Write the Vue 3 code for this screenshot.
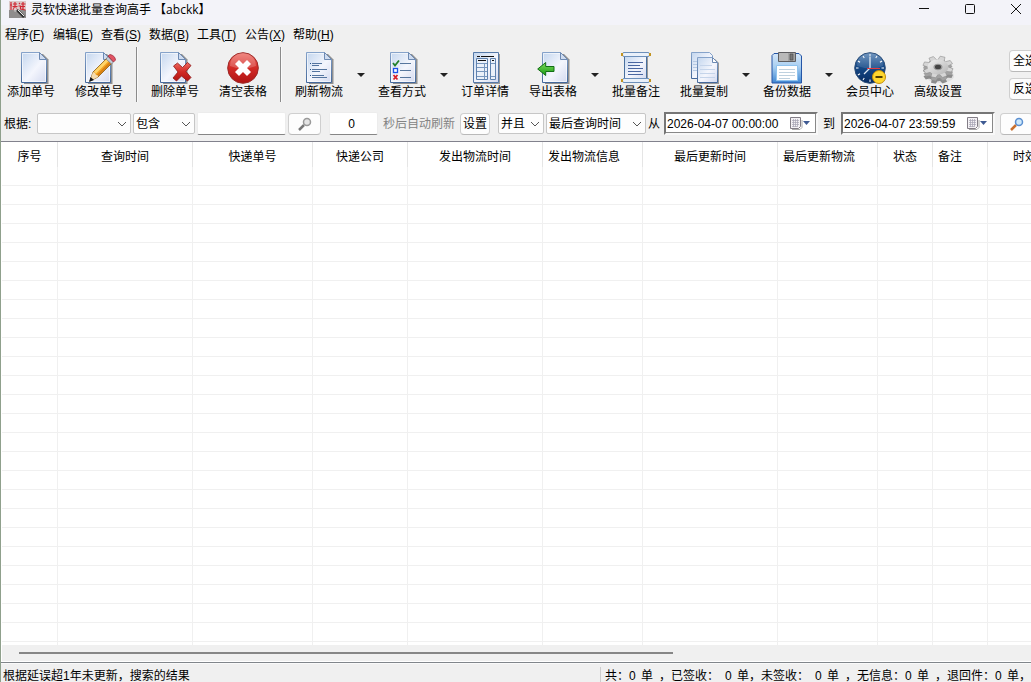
<script setup>
import { ref } from 'vue'

const menus = [
  ['程序', 'F'], ['编辑', 'E'], ['查看', 'S'], ['数据', 'B'],
  ['工具', 'T'], ['公告', 'X'], ['帮助', 'H'],
]

const tools = [
  { icon: 'add', label: '添加单号' },
  { icon: 'edit', label: '修改单号', sep: true },
  { icon: 'remove', label: '删除单号' },
  { icon: 'clear', label: '清空表格', sep: true },
  { icon: 'refresh', label: '刷新物流', drop: true },
  { icon: 'view', label: '查看方式', drop: true },
  { icon: 'detail', label: '订单详情' },
  { icon: 'export', label: '导出表格', drop: true },
  { icon: 'note', label: '批量备注' },
  { icon: 'copy', label: '批量复制', drop: true },
  { icon: 'backup', label: '备份数据', drop: true },
  { icon: 'member', label: '会员中心' },
  { icon: 'settings', label: '高级设置' },
]

const columns = [
  { title: '序号', size: 'w56' },
  { title: '查询时间', size: 'w135' },
  { title: '快递单号', size: 'w120' },
  { title: '快递公司', size: 'w95' },
  { title: '发出物流时间', size: 'w135' },
  { title: '发出物流信息', size: 'w100', left: true },
  { title: '最后更新时间', size: 'w135' },
  { title: '最后更新物流', size: 'w100', left: true },
  { title: '状态', size: 'w55' },
  { title: '备注', size: 'w55', left: true },
  { title: '时效', size: 'w75' },
]
const rowCount = 26

const stats = [
  { label: '共：', value: 0, end: '，', spaced: true, size: 's66' },
  { label: '已签收：', value: 0, end: '，', wide: true, size: 's90' },
  { label: '未签收：', value: 0, end: '，', wide: true, spaced: true, size: 's96' },
  { label: '无信息：', value: 0, end: '，', spaced: true, size: 's90' },
  { label: '退回件：', value: 0, end: '，', size: 's90' },
]

const keyword = ref('')
const seconds = ref('0')
const from = ref('2026-04-07 00:00:00')
const to = ref('2026-04-07 23:59:59')
const ticks = [0, 30, 60, 90, 120, 150, 180, 210, 240, 270, 300, 330]
const teeth = [0, 45, 90, 135, 180, 225, 270, 315]
</script>

<template>
  <div class="window">
    <svg class="defs" aria-hidden="true">
      <defs>
        <linearGradient id="paper" x1="0" y1="0" x2="1" y2="1">
          <stop offset="0" stop-color="#c3d6ee" />
          <stop offset=".55" stop-color="#f4f6fd" />
          <stop offset="1" stop-color="#d3d9ef" />
        </linearGradient>
        <linearGradient id="edge" x1="0" y1="0" x2="0" y2="1">
          <stop offset="0" stop-color="#86a3ca" />
          <stop offset="1" stop-color="#44689b" />
        </linearGradient>
        <linearGradient id="red" x1="0" y1="0" x2="0" y2="1">
          <stop offset="0" stop-color="#ee6a62" />
          <stop offset=".5" stop-color="#d22a26" />
          <stop offset="1" stop-color="#b01414" />
        </linearGradient>
        <linearGradient id="green" x1="0" y1="0" x2="0" y2="1">
          <stop offset="0" stop-color="#7fdc5c" />
          <stop offset="1" stop-color="#159a12" />
        </linearGradient>
        <linearGradient id="disk" x1="0" y1="0" x2="0" y2="1">
          <stop offset="0" stop-color="#d4e6f8" />
          <stop offset=".45" stop-color="#a9cff1" />
          <stop offset="1" stop-color="#3f86d2" />
        </linearGradient>
        <linearGradient id="clock" x1="0" y1="0" x2="0" y2="1">
          <stop offset="0" stop-color="#5d88b8" />
          <stop offset=".45" stop-color="#164a88" />
          <stop offset="1" stop-color="#082c62" />
        </linearGradient>
        <linearGradient id="steel" x1="0" y1="0" x2="1" y2="1">
          <stop offset="0" stop-color="#f2f2f2" />
          <stop offset="1" stop-color="#b4b4b4" />
        </linearGradient>
        <g id="sheet">
          <path d="M3 2h19l5.500 5.500V32H3z" fill="#000" opacity=".4" />
          <path d="M.500.500h18l7 7v23H.500z" fill="url(#paper)" stroke="url(#edge)" />
          <path d="M1.500 29.500V1.500H18M24.500 9v20.500h-22" fill="none" stroke="#fff" opacity=".6" />
          <path d="M18.500.500v7h7z" fill="#cfdcf0" stroke="#6d8ab3" />
        </g>
      </defs>
    </svg>

    <header class="titlebar">
      <svg class="app-icon" viewBox="0 0 17 17" aria-hidden="true">
        <rect width="17" height="17" fill="#8f8c8c" />
        <rect width="17" height="9" fill="#dcc9c8" />
        <path d="M2 1v8M1 4h2M4 3h4M6 1v4M3.500 5.500h5M6 5 4 9M6 5l2.500 4M10 2l1 1M9.500 5h2v3l5 1M12 3h4.500M14 1v7M12 5.500h4" fill="none" stroke="#d02835" stroke-width="1.200" />
        <circle cx="7" cy="8.500" r="2.500" fill="#ddd" opacity=".5" />
        <path d="m8 9 7 7" stroke="#333" stroke-width="2.500" />
        <path d="m9 9 6 6" stroke="#eee" />
      </svg>
      <h1>灵软快递批量查询高手 【abckk】</h1>
      <div class="win-buttons">
        <button type="button" aria-label="最小化"><svg viewBox="0 0 12 12"><path d="M1 5.500h10" /></svg></button>
        <button type="button" aria-label="最大化"><svg viewBox="0 0 12 12"><rect x="1.500" y="1.500" width="9" height="9" rx="1" /></svg></button>
        <button type="button" aria-label="关闭"><svg viewBox="0 0 12 12"><path d="m1 1 10 10M11 1 1 11" /></svg></button>
      </div>
    </header>

    <nav class="menu">
      <a v-for="m in menus" :key="m[1]" href="#">{{ m[0] }}(<u>{{ m[1] }}</u>)</a>
    </nav>

    <div class="toolbar">
      <template v-for="t in tools" :key="t.icon">
        <button type="button" class="tool">
          <svg viewBox="0 0 32 32" aria-hidden="true">
            <use v-if="t.icon === 'add'" href="#sheet" x="6" />
            <template v-else-if="t.icon === 'edit'">
              <use href="#sheet" x="2" />
              <path d="m7 29 3-9L24 6l5 5-14 14z" fill="#f5a623" stroke="#7a5314" stroke-width=".8" />
              <path d="M11 19.500 24 6.500l2 2-13 13z" fill="#ffd56a" />
              <path d="m15 24.500 13-13-1.500-1.500-13 13z" fill="#d98012" />
              <path d="m23 7 2-2.500 5.500 5.500-2 2z" fill="#c3ccd5" stroke="#667" stroke-width=".6" />
              <path d="m25 4 2-1.500q5 1 5.500 5.500L30.500 10z" fill="#e15464" stroke="#a22d3c" stroke-width=".8" />
              <path d="m7 29 3-9 2 1 1 2 2 .500v1.500z" fill="#f4dcb0" />
              <path d="m6 30 1.500-5 3.500 3z" fill="#151515" />
            </template>
            <template v-else-if="t.icon === 'remove'">
              <use href="#sheet" x="1" />
              <path d="m14.500 14 4-3 5 4.500 5-5 3.500 3-5 6 5 6-3.500 3.500-6-5-5 5-3.500-3 5-6z" fill="url(#red)" stroke="#8d1818" stroke-width=".8" />
            </template>
            <template v-else-if="t.icon === 'clear'">
              <circle cx="16" cy="16" r="15.300" fill="url(#red)" stroke="#9c2a28" />
              <path d="M3 14a13 13 0 0 1 26 0q-13 5-26 0" fill="#fff" opacity=".2" />
              <path d="m8 12 4-4 4 4 4-4 4 4-4 4 4 4-4 4-4-4-4 4-4-4 4-4z" fill="#fff" />
            </template>
            <template v-else-if="t.icon === 'refresh'">
              <use href="#sheet" x="3" />
              <path d="M7 11.500h1M7 17.500h1M7 23.500h1" stroke="#244f85" />
              <path d="M9 11.500h10M9 13.500h7M9 17.500h15M9 19.500h8M9 23.500h12M9 25.500h15" stroke="#54749f" />
            </template>
            <template v-else-if="t.icon === 'view'">
              <use href="#sheet" x="4" />
              <path d="m7 11 2 2.500 4-5" fill="none" stroke="#21802c" stroke-width="1.800" />
              <rect x="7.500" y="16.500" width="4" height="4" fill="#fff" stroke="#1c52e8" stroke-width="1.300" />
              <path d="m7.500 23 4 4.500m0-4.500-4 4.500" stroke="#d91e26" stroke-width="1.800" />
              <path d="M14 11.500h11M14 18.500h11M14 25.500h11" stroke="#56769e" />
            </template>
            <template v-else-if="t.icon === 'detail'">
              <path d="M5 2h26v30H5z" fill="#999" />
              <path d="M4.500.500h25v30h-25z" fill="url(#paper)" stroke="#5579a8" />
              <path d="M8 4.500h3M12 4.500h13" stroke="#111" />
              <path d="M7.500 6.500h11v21h-11zM21.500 6.500h5v21h-5z" fill="#eaf0f9" stroke="#5f82ae" />
              <path d="M9 8.500h8M23 8.500h2" stroke="#111" />
              <path d="M8 11.500h10M8 15.500h10M8 19.500h10M8 24.500h10M15.500 11v16M22 11.500h4M22 24.500h4" stroke="#7897be" />
            </template>
            <template v-else-if="t.icon === 'export'">
              <use href="#sheet" x="5" />
              <path d="m.700 17 8-6.500v4H17v5H8.700v4z" fill="url(#green)" stroke="#126e16" />
            </template>
            <template v-else-if="t.icon === 'note'">
              <path d="M6 4h22v25H6z" fill="#999" />
              <path d="M4.500 3.500h22v24h-22z" fill="url(#paper)" stroke="#486f9e" />
              <rect x="2.500" y=".5" width="27" height="4" rx="1.500" fill="#e9f0fa" stroke="#6c8fba" />
              <rect x="2.500" y="26.500" width="27" height="4" rx="1.500" fill="#e9f0fa" stroke="#6c8fba" />
              <path d="M2 1v3M30 1v3M2 27v3M30 27v3" stroke="#c29320" stroke-width="2" />
              <path d="M8 10.500h15M8 13.500h12M8 16.500h15M8 19.500h13M8 22.500h15" stroke="#4a66a0" />
            </template>
            <template v-else-if="t.icon === 'copy'">
              <path d="M3.500.500h18l3 3v23h-21z" fill="url(#paper)" stroke="url(#edge)" />
              <path d="M5 9.500h5M5 12.500h5M5 15.500h5M5 18.500h5" stroke="#b5c9e3" />
              <path d="M11 7h16l4 4v21H11z" fill="#999" />
              <path d="M9.500 5.500h15l5 5v20h-20z" fill="url(#paper)" stroke="url(#edge)" />
              <path d="M24.500 5.500v5h5z" fill="#fff" stroke="#6d8ab3" />
              <path d="M12 13.500h12M12 17.500h15M12 21.500h15M12 25.500h15" stroke="#c5d4ea" />
            </template>
            <template v-else-if="t.icon === 'backup'">
              <path d="M3 1.500h25l2.500 2.500v27H1V3.500z" fill="url(#disk)" stroke="#2455a6" />
              <path d="M7.500.500h17v9h-17z" fill="#a3a3a3" stroke="#5d5d60" />
              <path d="M8 1h9v8H8z" fill="#b9b9b9" />
              <path d="M19 2h3v6h-3z" fill="#777" stroke="#444" stroke-width=".6" />
              <path d="M5.500 13.500h21v15h-21z" fill="#fff" stroke="#8fc3ee" />
              <path d="M8 17.500h16M8 20.500h16M8 23.500h16M8 26.500h11" stroke="#bed1df" />
            </template>
            <template v-else-if="t.icon === 'member'">
              <circle cx="16" cy="16" r="15.300" fill="url(#clock)" stroke="#2a4d78" />
              <path d="M3 14a13 13 0 0 1 26 0q-10 5-26 0" fill="#fff" opacity=".13" />
              <path v-for="a in ticks" :key="a" d="M16 2v2.500" stroke="#fff" :transform="`rotate(${a} 16 16)`" />
              <path d="M16 5v11l-6 6" fill="none" stroke="#dfe8f2" stroke-width="1.300" />
              <path d="M13 16.500h13" stroke="#e6393c" />
              <circle cx="25" cy="25" r="6.500" fill="#ffd72e" stroke="#c28d09" />
              <path d="M21.500 25h7" stroke="#503e00" stroke-width="2" />
            </template>
            <template v-else>
              <ellipse cx="18" cy="24" rx="14" ry="7" fill="#e0e0e0" />
              <g transform="translate(16 21) scale(1 .72)">
                <circle r="11.500" fill="#8c8c8c" />
                <path v-for="a in teeth" :key="a" d="M-3.500-8-2.500-15h5l1 7z" fill="#8c8c8c" :transform="`rotate(${a + 18})`" />
              </g>
              <g transform="translate(16 18) scale(1 .72)">
                <circle r="11.500" fill="#a2a2a2" />
                <path v-for="a in teeth" :key="a" d="M-3.500-8-2.500-15h5l1 7z" fill="#a2a2a2" :transform="`rotate(${a + 18})`" />
              </g>
              <g transform="translate(16 15) scale(1 .72)">
                <path v-for="a in teeth" :key="a" d="M-3.500-8-2.500-15h5l1 7z" fill="#d6d6d6" stroke="#8a8a8a" stroke-width=".6" :transform="`rotate(${a + 18})`" />
                <circle r="10.500" fill="url(#steel)" />
                <circle r="3.800" fill="#444" stroke="#999" stroke-width="1.500" />
              </g>
            </template>
          </svg>
          <span>{{ t.label }}</span>
        </button>
        <button v-if="t.drop" type="button" class="drop" :aria-label="t.label + '选项'"></button>
        <i v-if="t.sep" class="sep"></i>
      </template>
      <div class="select-buttons">
        <button type="button" class="push">全选</button>
        <button type="button" class="push">反选</button>
      </div>
    </div>

    <form class="filter" @submit.prevent>
      <label for="field">根据:</label>
      <div class="combo c94">
        <select id="field"><option></option></select>
        <svg viewBox="0 0 10 6"><path d="m1 1 4 4 4-4" /></svg>
      </div>
      <div class="combo c62">
        <select aria-label="匹配方式"><option>包含</option></select>
        <svg viewBox="0 0 10 6"><path d="m1 1 4 4 4-4" /></svg>
      </div>
      <input v-model="keyword" class="field keyword" type="text" aria-label="关键字">
      <button type="submit" class="push search" aria-label="搜索">
        <svg viewBox="0 0 14 14"><path d="m1 13 5-5" stroke="#777" stroke-width="2.500" /><circle cx="9" cy="5" r="3.500" fill="#e4e4e4" stroke="#999" stroke-width="1.500" /></svg>
      </button>
      <input id="seconds" v-model="seconds" class="field seconds" type="text">
      <label class="muted" for="seconds">秒后自动刷新</label>
      <button type="button" class="push set">设置</button>
      <div class="combo c46">
        <select aria-label="条件关系"><option>并且</option></select>
        <svg viewBox="0 0 10 6"><path d="m1 1 4 4 4-4" /></svg>
      </div>
      <div class="combo c100">
        <select aria-label="时间类型"><option>最后查询时间</option></select>
        <svg viewBox="0 0 10 6"><path d="m1 1 4 4 4-4" /></svg>
      </div>
      <label class="from" for="from">从</label>
      <div class="date">
        <input id="from" v-model="from" type="text">
        <button type="button" aria-label="选择开始时间">
          <svg viewBox="0 0 21 13"><path d="M2 12.500h8l2-2V3" fill="none" stroke="#aaa" /><path d="M.500.500h10v9l-2 2h-8z" fill="#f3f1f4" stroke="#827d86" /><path d="M2 3.500h7M2 5.500h7M2 7.500h7M2 9.500h5M3.500 2v8M5.500 2v8M7.500 2v8" stroke="#a5a3b3" stroke-width=".7" /><path d="M13 4h7l-3.500 4z" fill="#3e5a92" /></svg>
        </button>
      </div>
      <label class="to" for="to">到</label>
      <div class="date">
        <input id="to" v-model="to" type="text">
        <button type="button" aria-label="选择结束时间">
          <svg viewBox="0 0 21 13"><path d="M2 12.500h8l2-2V3" fill="none" stroke="#aaa" /><path d="M.500.500h10v9l-2 2h-8z" fill="#f3f1f4" stroke="#827d86" /><path d="M2 3.500h7M2 5.500h7M2 7.500h7M2 9.500h5M3.500 2v8M5.500 2v8M7.500 2v8" stroke="#a5a3b3" stroke-width=".7" /><path d="M13 4h7l-3.500 4z" fill="#3e5a92" /></svg>
        </button>
      </div>
      <button type="button" class="push search" aria-label="按时间搜索">
        <svg viewBox="0 0 14 14"><path d="m1 13 5-5" stroke="#c96f2d" stroke-width="2.500" /><circle cx="9" cy="5" r="3.500" fill="#cfe9fb" stroke="#5b8fd0" stroke-width="1.500" /></svg>
      </button>
    </form>

    <main class="grid">
      <table>
        <thead>
          <tr><th v-for="c in columns" :key="c.title" :class="[c.size, { left: c.left }]">{{ c.title }}</th></tr>
        </thead>
        <tbody>
          <tr v-for="r in rowCount" :key="r"><td v-for="c in columns" :key="c.title"></td></tr>
        </tbody>
      </table>
    </main>
    <div class="scroll"><div class="thumb"></div></div>

    <footer class="status">
      <p>根据延误超1年未更新，搜索的结果</p>
      <div class="stats">
        <span v-for="s in stats" :key="s.label" class="stat" :class="[s.size, { wide: s.wide, spaced: s.spaced }]">
          <span>{{ s.label }}</span><b>{{ s.value }}</b><span>单</span><span class="end">{{ s.end }}</span>
        </span>
      </div>
    </footer>
  </div>
</template>

<style>
body { margin: 0; }
</style>

<style scoped>
* { box-sizing: border-box; }
.window {
  display: flex; flex-direction: column; height: 100vh; overflow: hidden;
  border-left: 1px solid #8fa08c; background: #f0f0f0; color: #000;
  font: 12px/14px "Liberation Sans", "Noto Sans CJK SC", sans-serif;
}
button, input, select { font: inherit; color: inherit; margin: 0; }
button { padding: 0; border: 0; background: none; }
.defs { position: absolute; width: 0; height: 0; }

.titlebar { display: flex; flex: none; height: 25px; background: #f3f3f9; padding-left: 8px; }
.app-icon { width: 17px; height: 17px; margin-top: 1px; }
h1 { margin: 0 0 0 5px; font: 12px/20px "Open Sans", "Noto Sans CJK SC", sans-serif; white-space: pre; }
.win-buttons { display: flex; margin-left: auto; height: 18px; }
.win-buttons button { display: flex; align-items: center; justify-content: center; width: 46px; }
.win-buttons button:last-child { margin-right: -8px; }
.win-buttons svg { width: 12px; height: 12px; fill: none; stroke: #111; }

.menu { display: flex; flex: none; height: 20px; padding-left: 4px; line-height: 20px; }
.menu a { width: 48px; color: inherit; text-decoration: none; white-space: nowrap; }

.toolbar { display: flex; flex: none; height: 64px; padding: 7px 0 0 6px; }
.toolbar > * { flex: none; }
.tool { display: flex; flex-direction: column; align-items: center; align-self: flex-start; gap: 1px; width: 48px; margin-right: 20px; white-space: nowrap; }
.tool svg { display: block; width: 32px; height: 32px; overflow: visible; }
.drop { display: flex; justify-content: center; width: 15px; height: 40px; margin-left: -10px; margin-right: 10px; padding-top: 21px; }
.drop::before { content: ""; border: 4px solid transparent; border-top-color: #222; border-bottom: 0; }
.sep { width: 2px; height: 55px; margin: -5px 13px 0 -7px; border-left: 1px solid #8b8b8b; border-right: 1px solid #fafafa; }
.select-buttons { display: flex; flex-direction: column; gap: 6px; margin: -2px 0 0 27px; }
.select-buttons .push { width: 32px; height: 22px; }
.push { flex: none; border: 1px solid #cfcfcf; border-bottom-color: #b9b9b9; border-radius: 4px; background: #fdfdfd; }

.filter { display: flex; flex: none; align-items: center; height: 33px; padding: 0 0 3px 3px; border-bottom: 1px solid #82828d; white-space: nowrap; }
.filter > * { flex: none; }
.filter > label:first-child { width: 33px; }
.combo { position: relative; height: 21px; margin-right: 2px; }
.combo select { display: block; width: 100%; height: 100%; padding: 0 0 0 2px; border: 1px solid #c6c6c6; border-radius: 2px; background: #fdfdfd; appearance: none; outline: 0; }
.combo svg { position: absolute; right: 4px; top: 8px; width: 10px; height: 6px; fill: none; stroke: #555; pointer-events: none; }
.c94 { width: 94px; }
.c62 { width: 62px; }
.c46 { width: 46px; }
.c100 { width: 100px; }
.field { height: 23px; border: 1px solid #ececec; border-bottom-color: #868686; border-radius: 2px; background: #fff; outline: 0; }
.keyword { width: 89px; margin-right: 2px; }
.seconds { width: 49px; margin: 0 5px 0 8px; padding: 0 4px 0 0; text-align: center; }
.search { display: flex; align-items: center; justify-content: center; width: 33px; height: 22px; }
.search svg { width: 14px; height: 14px; fill: none; }
.muted { width: 77px; color: #838383; }
.set { width: 30px; height: 22px; margin-right: 8px; }
.from { width: 16px; }
.to { width: 18px; }
.date { display: flex; align-items: center; width: 154px; height: 23px; margin-right: 5px; border: 2px solid #767676; border-color: #767676 #f8f8f8 #f8f8f8 #767676; background: #fff; box-shadow: inset -1px -1px #888; }
.date input { flex: 1; min-width: 0; padding: 0 0 0 1px; border: 0; background: none; outline: 0; }
.date button { width: 21px; height: 13px; margin-right: 5px; }
.date svg { display: block; width: 21px; height: 13px; }

.grid { flex: 1; min-height: 0; overflow: hidden; padding-left: 1px; background: #fff; }
table { width: 1061px; min-width: 100%; table-layout: fixed; border-spacing: 0; }
th { height: 25px; padding: 4px 0 0; border-right: 1px solid #e5e5e5; font-weight: 400; text-align: center; white-space: nowrap; }
th.left { padding-left: 5px; text-align: left; }
td { height: 19px; padding: 0; border-right: 1px solid #f0f0f0; border-bottom: 1px solid #f0f0f0; }
.w56 { width: 56px; }
.w135 { width: 135px; }
.w120 { width: 120px; }
.w95 { width: 95px; }
.w100 { width: 100px; }
.w55 { width: 55px; }
.w75 { width: 75px; }

.scroll { flex: none; height: 18px; padding: 7px 6px 0 18px; border-bottom: 1px solid #81868b; box-shadow: inset 1px -1px #fff; }
.thumb { width: 65%; height: 2px; background: #868686; }
.status { display: flex; flex: none; justify-content: space-between; height: 19px; padding-top: 3px; border-top: 1px solid #fafafa; line-height: 12px; white-space: nowrap; overflow: hidden; }
.status p { margin: 0; padding: 3px 0 0 2px; }
.stats { display: flex; flex: none; width: 431px; padding: 3px 0 0 4px; border-left: 1px solid #cdcdcd; }
.stat { display: flex; flex: none; }
.stat b { width: 6px; margin-right: 6px; font-weight: 400; }
.wide b { margin-left: 6px; }
.spaced .end { margin-left: 6px; }
.s66 { width: 66px; }
.s90 { width: 90px; }
.s96 { width: 96px; }
</style>
